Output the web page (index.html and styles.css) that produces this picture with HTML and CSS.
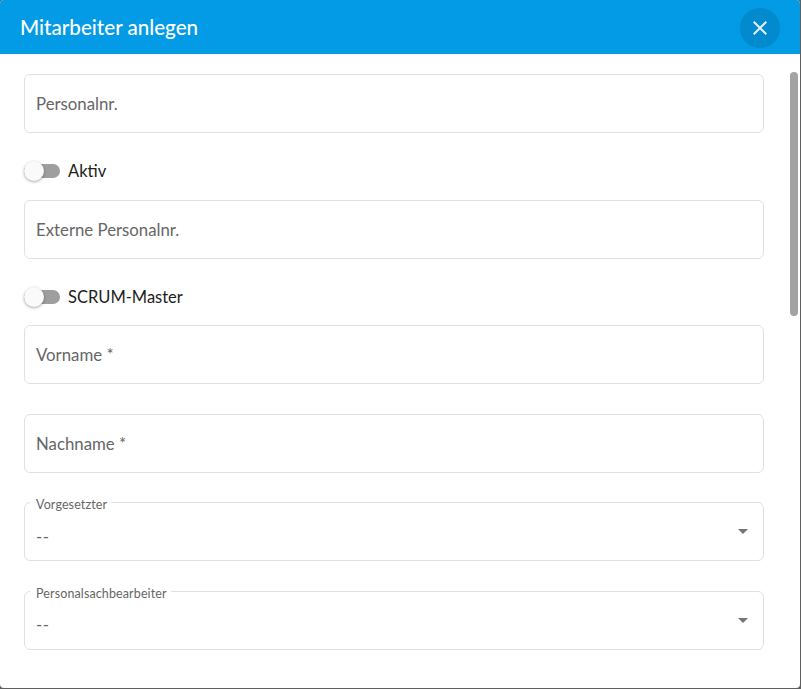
FILE: index.html
```html
<!DOCTYPE html>
<html lang="de">
<head>
<meta charset="utf-8">
<title>Mitarbeiter anlegen</title>
<link rel="stylesheet" href="styles.css">
</head>
<body>
<div class="dialog">
  <header class="dialog-header">
    <h1 class="dialog-title">Mitarbeiter anlegen</h1>
    <button class="close-btn" type="button" aria-label="Schließen">
      <svg width="24" height="24" viewBox="0 0 24 24"><path d="M19 6.41 17.59 5 12 10.59 6.41 5 5 6.41 10.59 12 5 17.59 6.41 19 12 13.41 17.59 19 19 17.59 13.41 12z" fill="currentColor"/></svg>
    </button>
  </header>
  <div class="dialog-body">
    <div class="field"><span class="placeholder">Personalnr.</span></div>
    <div class="toggle-row"><span class="switch"><span class="track"></span><span class="thumb"></span></span><span class="toggle-label">Aktiv</span></div>
    <div class="field"><span class="placeholder">Externe Personalnr.</span></div>
    <div class="toggle-row"><span class="switch"><span class="track"></span><span class="thumb"></span></span><span class="toggle-label">SCRUM-Master</span></div>
    <div class="field spaced"><span class="placeholder">Vorname *</span></div>
    <div class="field spaced"><span class="placeholder">Nachname *</span></div>
    <div class="field select spaced">
      <span class="float-label">Vorgesetzter</span>
      <span class="value">--</span>
      <span class="caret"></span>
    </div>
    <div class="field select">
      <span class="float-label">Personalsachbearbeiter</span>
      <span class="value">--</span>
      <span class="caret"></span>
    </div>
  </div>
  <div class="scroll-thumb"></div>
</div>
</body>
</html>
```
FILE: styles.css
```css
* { box-sizing: border-box; }
html, body { margin: 0; height: 100%; }
body {
  background: #5f5f5f;
  font-family: "Lato", "Liberation Sans", sans-serif;
  overflow: hidden;
}
.dialog {
  position: relative;
  width: 800px;
  height: 688px;
  background: #fff;
  border-radius: 4px;
  overflow: hidden;
}
.dialog-header {
  height: 54px;
  background: #039be5;
  color: #fff;
  display: flex;
  align-items: center;
  justify-content: space-between;
  padding: 0 20px;
}
.dialog-title {
  margin: 0 0 1px;
  font-size: 20.6px;
  font-weight: 500;
}
.close-btn {
  width: 40px;
  height: 40px;
  margin-top: 1px;
  border: 0;
  padding: 0;
  border-radius: 50%;
  background: #028ace;
  color: #e6eef2;
  display: flex;
  align-items: center;
  justify-content: center;
}
.dialog-body {
  padding: 20px 36px 0 24px;
}
.field {
  position: relative;
  height: 59px;
  border: 1px solid #e0e0e0;
  border-radius: 6px;
  display: flex;
  align-items: center;
  padding: 0 11px;
  font-size: 16.8px;
  color: #666;
}
.spaced { margin-bottom: 29.5px; }
.toggle-row {
  height: 66.5px;
  padding-top: 10px;
  display: flex;
  align-items: center;
  gap: 8px;
  font-size: 16.5px;
  color: #212121;
}
.switch {
  position: relative;
  width: 36px;
  height: 20px;
}
.track {
  position: absolute;
  left: 0;
  right: 0;
  top: 3px;
  height: 14px;
  border-radius: 7px;
  background: #9e9e9e;
}
.thumb {
  position: absolute;
  left: 0;
  top: 0;
  width: 20px;
  height: 20px;
  border-radius: 50%;
  background: #fafafa;
  box-shadow: 0 1px 3px rgba(0,0,0,.35);
}
.select { padding-top: 9px; }
.value { color: #666; letter-spacing: .6px; }
.float-label {
  position: absolute;
  left: 5px;
  top: -6px;
  padding: 0 4px 0 6px;
  background: #fff;
  font-size: 12.5px;
  letter-spacing: .12px;
  line-height: 15px;
  color: #666;
}
.caret {
  position: absolute;
  right: 15px;
  top: 26px;
  width: 0;
  height: 0;
  border-left: 5px solid transparent;
  border-right: 5px solid transparent;
  border-top: 5px solid #757575;
}
.scroll-thumb {
  position: absolute;
  left: 790px;
  top: 72px;
  width: 8px;
  height: 244px;
  border-radius: 4px;
  background: #a3a3a3;
}
```
